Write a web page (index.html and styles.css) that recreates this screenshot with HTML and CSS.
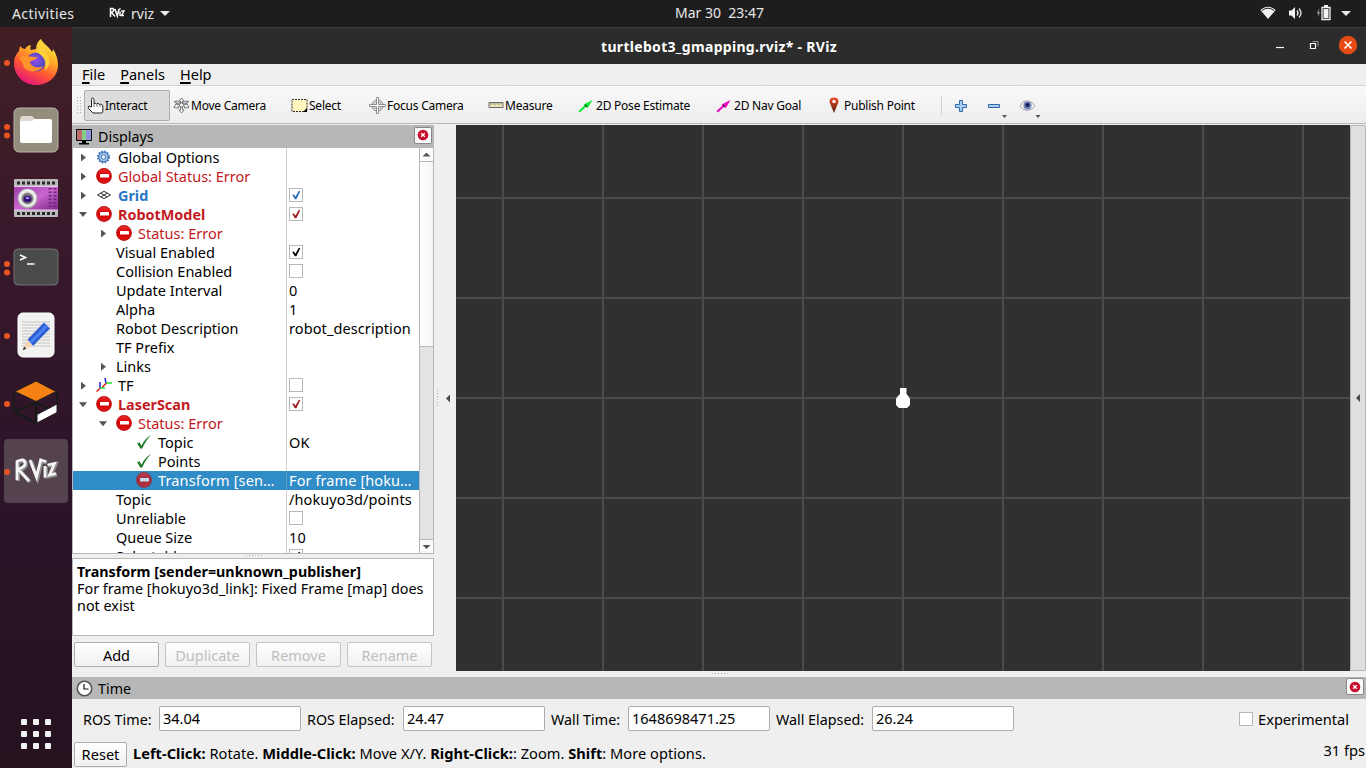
FILE: index.html
```html
<!DOCTYPE html>
<html lang="en">
<head>
<meta charset="utf-8">
<title>turtlebot3_gmapping.rviz* - RViz</title>
<link rel="stylesheet" href="styles.css">
</head>
<body>
<svg class="defs" width="0" height="0">
  <defs>
    <linearGradient id="redg" x1="0" y1="0" x2="0" y2="1"><stop offset="0" stop-color="#ee2a2a"/><stop offset=".5" stop-color="#d40000"/><stop offset="1" stop-color="#e01515"/></linearGradient>
    <symbol id="err" viewBox="0 0 16 16"><circle cx="8" cy="8" r="7.9" fill="#b51212"/><circle cx="8" cy="8" r="7.1" fill="url(#redg)"/><rect x="4" y="6" width="9" height="3.4" rx=".5" fill="#fff"/></symbol>
    <symbol id="ok" viewBox="0 0 14 14"><path d="M1 8.3 3 7.2 4.800 10.200C6.800 6 9.500 3 13.200.6 9.800 4.400 7.500 8 5.400 12.600L4 13z" fill="#1c7a25"/></symbol>
    <symbol id="tick" viewBox="0 0 14 14"><path d="M3.200 6.800 5 6.400 6.400 8.700 9.900 2.800 11.300 3.300 7.300 11.300H5.900z" fill="currentColor"/></symbol>
    <symbol id="close" viewBox="0 0 12 12"><circle cx="6" cy="6" r="5.300" fill="#c8102e"/><path d="m4.200 4.200 3.600 3.600m0-3.600L4.200 7.800" stroke="#fff" stroke-width="1.400"/></symbol>
    <symbol id="posearrow" viewBox="0 0 16 16"><path d="M1.200 13.800 8 7.500" stroke="currentColor" stroke-width="2.200"/><path d="M14.500 2 5.500 6.500 8 9l1.800 1z" fill="currentColor"/><path d="m7 7 1.800 1.600" stroke="#222" stroke-width="1.200"/></symbol>
  </defs>
</svg>
<div class="desktop">
  <header class="topbar">
    <span class="activities">Activities</span>
    <span class="appmenu"><svg width="16" height="12" viewBox="0 0 16 12" fill="none" stroke="#fff" stroke-width="1.500"><path d="M1.500 10V1.600H4Q6 3.400 2.500 5.500L6 9.500M6 2l2.300 7L10 2M11 4.500V9M12.200 4H15l-2.500 4.500H15M11 1.200v1.200"/></svg><span class="appname">rviz</span><i class="down"></i></span>
    <span class="clock">Mar 30&nbsp; 23:47</span>
    <span class="indicators">
      <svg width="16" height="14" viewBox="0 0 16 14"><path d="M.4 4.100Q8-2.400 15.600 4.100L8 13z" fill="#f2f2f2"/><path d="M2 4.500Q8-.1 14 4.500" fill="none" stroke="#222" stroke-width="1"/></svg>
      <svg width="16" height="14" viewBox="0 0 16 14"><path d="M1 4.500h2.500L7 1v12L3.500 9.500H1z" fill="#f2f2f2"/><path d="M9 4.500q2 2.500 0 5M11 2.500q4 4.500 0 9" fill="none" stroke="#ddd" stroke-width="1.400"/></svg>
      <svg width="15" height="16" viewBox="0 0 15 16"><path d="M3.500 3 .5 8.500h1.800L1.500 12.500 4.500 7H2.800z" fill="#888"/><path d="M6 2.500h8v12H6z" fill="none" stroke="#f2f2f2" stroke-width="1.300"/><path d="M8 0h4v2H8zM7.500 4h5v9h-5z" fill="#f2f2f2"/></svg>
      <i class="down"></i>
    </span>
  </header>

  <nav class="dock">
    <div class="slot one"><svg width="46" height="48" viewBox="0 0 46 48">
      <defs><linearGradient id="fx" x1=".8" y1="0" x2=".3" y2="1"><stop offset="0" stop-color="#fff14a"/><stop offset=".35" stop-color="#ffb02a"/><stop offset=".65" stop-color="#ff5a30"/><stop offset="1" stop-color="#e3127e"/></linearGradient><radialGradient id="fb" cx=".5" cy=".4"><stop offset="0" stop-color="#8f4df0"/><stop offset="1" stop-color="#5048b8"/></radialGradient></defs>
      <path d="M28 1c2 5 8 7 11 13 1-1 1-2 1-3 4 6 5 12 5 16 0 12-10 20-22 20S1 38 1 25c0-5 2-9 5-12l1-5c2 2 3 3 5 3 2-3 4-4 6-4-1 2-1 4 0 5l5-1c0-4 2-8 5-10z" fill="url(#fx)"/>
      <circle cx="23" cy="24" r="9.500" fill="url(#fb)"/><path d="M6 20c5-4 11-1 18-1 0 3-5 3-7 5 1 5 8 7 13 4-4 8-19 7-20-2z" fill="#ff942d"/><path d="M23 14q2-6 7-8 1 7 5 12c3 6 1 12-3 14q2-9-3-14-3-3-6-4z" fill="#ffcf3a"/></svg></div>
    <div class="slot two"><svg width="46" height="46" viewBox="0 0 46 46"><rect x="1" y="1" width="44" height="44" rx="5" fill="#938d7d" stroke="#b9b4a5"/><path d="M7 13q0-4 3-4h9l4 4h14q2 0 2 2v5H7z" fill="#dedad0"/><path d="M7 16q0-2 2-2h10l3-2h15q2 0 2 2v20q0 2-2 2H9q-2 0-2-2z" fill="#fff"/></svg></div>
    <div class="slot"><svg width="44" height="40" viewBox="0 0 44 40"><defs><linearGradient id="pg" x1="0" y1="0" x2="1" y2="1"><stop offset="0" stop-color="#9d3fa6"/><stop offset=".5" stop-color="#ca65cf"/><stop offset="1" stop-color="#7c2887"/></linearGradient></defs><rect y="1" width="44" height="38" rx="1" fill="#b9b9b9"/><path d="M3 5h40M3 35.500h40" stroke="#292929" stroke-width="3" stroke-dasharray="3 2"/><rect y="8" width="44" height="24" fill="url(#pg)"/><path d="M0 8.500h44M0 32h44" stroke="#f0c6f2"/><circle cx="13.500" cy="20.500" r="10" fill="#aaa"/><circle cx="13.500" cy="20" r="9" fill="#eee"/><circle cx="13.500" cy="20.500" r="6" fill="#777" stroke="#ccc"/><ellipse cx="13.500" cy="21" rx="4" ry="3.300" fill="#311272"/><ellipse cx="13.500" cy="20" rx="2" ry="1.300" fill="#a478ff"/><path d="M36 10v20M41 10v20" stroke="#702879" stroke-width="3" stroke-dasharray="1.500 2"/></svg></div>
    <div class="slot two"><svg width="46" height="38" viewBox="0 0 46 38"><rect x="1" y="1" width="44" height="36" rx="4" fill="#4a4a4a" stroke="#717171"/><path d="m7 7 5.500 2.500L7 12M14 16h7.500" fill="none" stroke="#fff" stroke-width="1.600"/></svg></div>
    <div class="slot one"><svg width="38" height="46" viewBox="0 0 38 46"><rect x="1" y="1" width="36" height="44" rx="5" fill="#f2f2f1" stroke="#fff"/><path d="M5 10h28M5 13h28M5 16h28M5 19h28M5 22h28M5 25h28M5 28h28M5 31h28M5 34h28" stroke="#c4c4c4"/><path d="M27 10.500 33 16.500 16 34 10.500 27.500z" fill="#2c5ed4"/><path d="m29 12.500 2 2L14 32l-2-2z" fill="#4b84ef"/><path d="m10.500 27.500 5.500 6.500-10 4z" fill="#f5d6b5"/><path d="m7.200 34.500 2 2.200-3.500 1.500z" fill="#333"/></svg></div>
    <div class="slot one"><svg width="50" height="48" viewBox="0 0 50 48"><path d="M3 13.500v19L25 44.500M25 23 3 33M25 23v21M25 24l20 9M46 13v12" fill="none" stroke="#171a17" stroke-width="2.200"/><path d="M25 2 45 12.500 25 22.500 4 12.500z" fill="#f58113" stroke="#20201c"/><path d="M26 35.500 46 25v8.500L26 44z" fill="#fff" stroke="#1d1b1c"/></svg></div>
    <div class="slot one"><div class="active"><svg width="46" height="30" viewBox="0 0 46 30" fill="none"><path d="M5 25V6.500Q12 3 13 7.500T6 14l11 12M18 5l6.500 17L29 3.500M33 11v11.500M35.500 10l7-1.500L37.500 20l6.500-1.500M30 5.500l4 1" stroke="#8b8b8b" stroke-width="4"/><path d="M4 24V5.500Q11 2 12 6.500T5 13l11 12M17 4l6.500 17L28 2.500M32 10v11.500M34.500 9l7-1.500L36.500 19l6.500-1.500M29 4.500l4 1" stroke="#f5f5f5" stroke-width="2.800"/></svg></div></div>
    <div class="apps"><i></i><i></i><i></i><i></i><i></i><i></i><i></i><i></i><i></i></div>
  </nav>

  <main class="window">
    <div class="titlebar"><b>turtlebot3_gmapping.rviz* - RViz</b>
      <span class="winctl"><svg width="82" height="20" viewBox="0 0 82 20" fill="none"><path d="M0 12.500h8" stroke="#fff" stroke-width="1.200"/><path d="M34.500 8.500h5v5h-5z" stroke="#fff" stroke-width="1.200"/><path d="M36.500 6.500h5.500v5" stroke="#999"/><circle cx="72" cy="10" r="9.200" fill="#e64b17"/><path d="m68.500 6.500 7 7m0-7-7 7" stroke="#fff" stroke-width="1.600"/></svg></span></div>
    <div class="menubar"><span><u>F</u>ile</span><span><u>P</u>anels</span><span><u>H</u>elp</span></div>
    <div class="toolbar">
      <svg class="grip" width="5" height="18" viewBox="0 0 5 18"><path d="M.5 0v18M3.500 0v18" stroke="#aaa" stroke-dasharray="1 2"/></svg>
      <div class="tool interact"><svg width="18" height="18" viewBox="0 0 18 18"><path d="M4.500 10V2.500Q4.500 1 5.500 1T7 2.500V7l1-1 1.500 1 1.500-.8 1.500 1.300 1.500-.5 1.800 1.500V15l-1 1H6L1.500 11.500Q.5 9.500 2 9z" fill="#fff" stroke="#222"/><path d="M7 6v4M10 7v3M13 8v2" stroke="#777"/></svg><span>Interact</span></div>
      <div class="tool move"><svg width="17" height="17" viewBox="0 0 17 17" fill="#fff" stroke="#777"><path d="M8.500 1 11 4H9.500v3H7.500V4H6zM8.500 16l2.500-3H9.500v-3h-2v3H6z"/><path d="M1 4.500 4 4l9 4 .5-2 2.500 4.500-4.500.5.500-1.500-8-3.500zM16 4.500 13 4 4 8l-.5-2L1 10.500l4.500.5-.5-1.500 8-3.500z"/><circle cx="8.500" cy="8" r="2"/></svg><span>Move Camera</span></div>
      <div class="tool select"><svg width="17" height="17" viewBox="0 0 17 17"><path d="M1 2.500h15v12H1z" fill="#fff6bf" stroke="#333" stroke-dasharray="2 1"/><path d="M16 11v4h-4z"/></svg><span>Select</span></div>
      <div class="tool focus"><svg width="17" height="17" viewBox="0 0 17 17" fill="none" stroke="#777"><circle cx="8.500" cy="8.500" r="5.500"/><circle cx="8.500" cy="8.500" r="3.700" stroke="#aaa"/><path d="M7.500 7.500v-7h2v7h7v2h-7v7h-2v-7h-7v-2z" fill="#fff" stroke-width=".8"/></svg><span>Focus Camera</span></div>
      <div class="tool measure"><svg width="16" height="17" viewBox="0 0 16 17"><path d="M1 5.500h14v5H1z" fill="#f6e9b5" stroke="#666"/><path d="M3 5.500v3M5 5.500v2M7 5.500v3M9 5.500v2M11 5.500v3M13 5.500v2" stroke="#777" stroke-width=".8"/></svg><span>Measure</span></div>
      <div class="tool pose"><svg width="16" height="16"><use href="#posearrow"/></svg><span>2D Pose Estimate</span></div>
      <div class="tool nav"><svg width="16" height="16"><use href="#posearrow"/></svg><span>2D Nav Goal</span></div>
      <div class="tool publish"><svg width="13" height="17" viewBox="0 0 13 17"><defs><linearGradient id="pin" x2="0" y2="1"><stop stop-color="#ed4925"/><stop offset="1" stop-color="#542313"/></linearGradient></defs><path d="M6 .5C1.500.5.500 4 2.500 7.500L6 16 9.500 7.500C11.500 4 10.500.5 6 .5z" fill="url(#pin)"/><circle cx="6" cy="4.500" r="1.700" fill="#fff"/></svg><span>Publish Point</span></div>
      <i class="sep"></i>
      <svg class="plus" width="14" height="14" viewBox="0 0 14 14"><path d="M5.500 1.500h3v4h4v3h-4v4h-3v-4h-4v-3h4z" fill="#a7cbed" stroke="#2f68ad"/></svg>
      <svg class="minus" width="24" height="28" viewBox="0 0 24 28"><path d="M2.500 12.500h11v3h-11z" fill="#a7cbed" stroke="#2f68ad"/><path d="M16 23h5l-2.500 3z" fill="#555"/></svg>
      <svg class="eye" width="24" height="28" viewBox="0 0 24 28"><path d="M1 14.500Q3 8.500 9 9q5 .5 7 5-2 4-8 4.500-4 0-7-4z" fill="#eee" stroke="#aaa"/><circle cx="8.500" cy="13.500" r="4" fill="#7183bd"/><circle cx="8.500" cy="13" r="2" fill="#111743"/><path d="M16.500 23h5L19 26z" fill="#555"/></svg>
    </div>

    <div class="center">
      <section class="displays">
        <div class="paneltitle"><svg width="16" height="17" viewBox="0 0 16 17"><path d="M0 1h16v12H0z" fill="#111"/><path d="M1 2h5v10H1z" fill="#bd6d6d"/><path d="M6 2h4v10H6z" fill="#83ce83"/><path d="M10 2h5v10h-5z" fill="#9292df"/><path d="M6 13h4v2h3v1.500H3V15h3z"/></svg><span>Displays</span><span class="closebtn"><svg width="12" height="12"><use href="#close"/></svg></span></div>
        <div class="tree">
          <div class="rows">
            <div class="row l0"><div class="name"><i class="tri"></i><svg class="ico" viewBox="0 0 16 16"><circle cx="7.500" cy="8" r="4.800" fill="#a9c8ec" stroke="#3e72b5" stroke-width="1.200"/><circle cx="7.500" cy="8" r="5.800" fill="none" stroke="#3e72b5" stroke-width="1.600" stroke-dasharray="1.600 1.440"/><circle cx="7.500" cy="8" r="2.200" fill="#eef5fd" stroke="#3e72b5"/></svg><span>Global Options</span></div><div class="val"></div></div>
            <div class="row l0 red"><div class="name"><i class="tri"></i><svg class="ico"><use href="#err"/></svg><span>Global Status: Error</span></div><div class="val"></div></div>
            <div class="row l0 blue bold"><div class="name"><i class="tri"></i><svg class="ico" viewBox="0 0 16 16" fill="none" stroke="#333"><path d="m1.500 8 6.500-3.700L14.500 8 8 11.700zM4.500 6l6.500 4M11.500 6l-6.500 4"/></svg><span>Grid</span></div><div class="val"><span class="box"><svg><use href="#tick"/></svg></span></div></div>
            <div class="row l0 red bold"><div class="name"><i class="tri open"></i><svg class="ico"><use href="#err"/></svg><span>RobotModel</span></div><div class="val"><span class="box"><svg><use href="#tick"/></svg></span></div></div>
            <div class="row l1 red"><div class="name"><i class="tri"></i><svg class="ico"><use href="#err"/></svg><span>Status: Error</span></div><div class="val"></div></div>
            <div class="row prop"><div class="name"><i class="tri none"></i><span>Visual Enabled</span></div><div class="val"><span class="box"><svg><use href="#tick"/></svg></span></div></div>
            <div class="row prop"><div class="name"><i class="tri none"></i><span>Collision Enabled</span></div><div class="val"><span class="box"></span></div></div>
            <div class="row prop"><div class="name"><i class="tri none"></i><span>Update Interval</span></div><div class="val">0</div></div>
            <div class="row prop"><div class="name"><i class="tri none"></i><span>Alpha</span></div><div class="val">1</div></div>
            <div class="row prop"><div class="name"><i class="tri none"></i><span>Robot Description</span></div><div class="val">robot_description</div></div>
            <div class="row prop"><div class="name"><i class="tri none"></i><span>TF Prefix</span></div><div class="val"></div></div>
            <div class="row prop"><div class="name"><i class="tri"></i><span>Links</span></div><div class="val"></div></div>
            <div class="row l0"><div class="name"><i class="tri"></i><svg class="ico" viewBox="0 0 16 16" fill="none" stroke-width="1.500"><path d="m.5 14.500 4-3.500M6 10.500l4.500-4.500" stroke="#e01818"/><path d="M4 11V5M10 6l-1-5" stroke="#2029df"/><path d="M4 11h5M10.500 6H16" stroke="#24e524"/></svg><span>TF</span></div><div class="val"><span class="box"></span></div></div>
            <div class="row l0 red bold"><div class="name"><i class="tri open"></i><svg class="ico"><use href="#err"/></svg><span>LaserScan</span></div><div class="val"><span class="box"><svg><use href="#tick"/></svg></span></div></div>
            <div class="row l1 red"><div class="name"><i class="tri open"></i><svg class="ico"><use href="#err"/></svg><span>Status: Error</span></div><div class="val"></div></div>
            <div class="row l2"><div class="name"><svg class="ico"><use href="#ok"/></svg><span>Topic</span></div><div class="val">OK</div></div>
            <div class="row l2"><div class="name"><svg class="ico"><use href="#ok"/></svg><span>Points</span></div><div class="val"></div></div>
            <div class="row l2 selected"><div class="name"><svg class="ico"><use href="#err"/></svg><span>Transform [sen…</span></div><div class="val">For frame [hoku…</div></div>
            <div class="row prop"><div class="name"><i class="tri none"></i><span>Topic</span></div><div class="val">/hokuyo3d/points</div></div>
            <div class="row prop"><div class="name"><i class="tri none"></i><span>Unreliable</span></div><div class="val"><span class="box"></span></div></div>
            <div class="row prop"><div class="name"><i class="tri none"></i><span>Queue Size</span></div><div class="val">10</div></div>
            <div class="row prop"><div class="name"><i class="tri none"></i><span>Selectable</span></div><div class="val"><span class="box"><svg><use href="#tick"/></svg></span></div></div>
          </div>
          <div class="scroll"><div class="arrow up"></div><div class="thumb"></div><div class="track"></div><div class="arrow dn"></div></div>
        </div>
        <div class="hsplit"></div>
        <div class="desc"><b>Transform [sender=unknown_publisher]</b><br>For frame [hokuyo3d_link]: Fixed Frame [map] does<br>not exist</div>
        <div class="buttons"><button>Add</button><button disabled>Duplicate</button><button disabled>Remove</button><button disabled>Rename</button></div>
      </section>
      <div class="lhandle"><i class="vdots"></i><i class="left"></i></div>
      <section class="view"><svg width="14" height="20" viewBox="0 0 14 20"><path d="M4 0h6.500v6L13 9l1 2v6l-3 3H3l-3-3v-6l1-2 3-3z" fill="#fff"/></svg></section>
      <div class="rhandle"><i class="left"></i></div>
    </div>

    <div class="hsplit wide"></div>
    <div class="paneltitle time"><svg width="17" height="17" viewBox="0 0 17 17"><circle cx="8.500" cy="8.500" r="7.200" fill="#fff" stroke="#555" stroke-width="1.600"/><path d="M8 4v5h4.500" fill="none" stroke="#111" stroke-width="1.200"/></svg><span>Time</span><span class="closebtn"><svg width="12" height="12"><use href="#close"/></svg></span></div>
    <div class="timerow">
      <label class="t1">ROS Time:</label><span class="input">34.04</span>
      <label class="t2">ROS Elapsed:</label><span class="input">24.47</span>
      <label class="t3">Wall Time:</label><span class="input">1648698471.25</span>
      <label class="t4">Wall Elapsed:</label><span class="input">26.24</span>
      <span class="exp"><span class="box"></span><span class="explabel">Experimental</span></span>
    </div>
    <footer class="status"><button class="reset">Reset</button><span class="help"><b>Left-Click:</b> Rotate. <b>Middle-Click:</b> Move X/Y. <b>Right-Click:</b>: Zoom. <b>Shift</b>: More options.</span><span class="fps">31 fps</span></footer>
  </main>
</div>
</body>
</html>
```
FILE: styles.css
```css
* { box-sizing: border-box; }
body { margin: 0; font: 14px/19px "Noto Sans", "Open Sans", sans-serif; color: #000; overflow: hidden; }
svg { display: block; flex: none; }
.defs { position: absolute; }
i { display: block; flex: none; }
.desktop { width: 1366px; height: 768px; display: grid; grid-template: 27px 741px / 72px 1294px; }

.topbar { grid-column: 1 / 3; background: #1d1d1d; color: #e8e8e8; display: grid; grid-template-columns: 109px 1fr auto; align-items: center; position: relative; padding-bottom: 1px; }
.activities { padding-left: 12px; letter-spacing: .4px; }
.appmenu { display: flex; align-items: center; }
.appname { margin-left: 6px; width: 24px; }
.down { width: 0; height: 0; border: 5px solid transparent; border-top-color: #e8e8e8; border-bottom: 0; margin-left: 5px; }
.clock { position: absolute; left: 675px; top: 3px; white-space: nowrap; }
.indicators { display: flex; align-items: center; gap: 12px; padding-right: 15px; }
.indicators .down { margin-left: -2px; }

.dock { background: linear-gradient(#421f25, #38192b 28%, #2d1429 62%, #24121f); display: flex; flex-direction: column; height: 741px; padding-top: 1px; }
.slot { height: 68.200px; display: grid; place-items: center; position: relative; }
.slot.one::before, .slot.two::before { content: ""; position: absolute; z-index: 1; left: 4px; top: 32px; width: 6px; height: 6px; border-radius: 50%; background: #e95420; }
.slot.two::before { top: 28px; box-shadow: 0 8.500px #e95420; }
.active { width: 64px; height: 64px; background: #54434f; border-radius: 4px; display: grid; place-items: center; }
.apps { margin: auto auto 19px; display: grid; grid-template-columns: repeat(3, 6px); gap: 6px; }
.apps i { width: 6px; height: 6px; border-radius: 1px; background: #f2f2f2; }

.window { background: #efefef; display: flex; flex-direction: column; font-size: 14.500px; }
.window > * { flex: none; }
.titlebar { height: 37px; background: #2c2c2c; border-top: 1px solid #3d3d3d; color: #fff; display: flex; align-items: center; justify-content: center; position: relative; font-size: 14px; letter-spacing: .3px; }
.winctl { position: absolute; right: 8px; top: 7px; }
.menubar { height: 22px; border-bottom: 1px solid #d3d3d3; display: flex; padding-left: 10px; gap: 15px; line-height: 21px; }
.menubar u { text-decoration-thickness: 2px; text-underline-offset: 2px; }
.toolbar { height: 38px; background: linear-gradient(#f9f9f9, #ededed); border-bottom: 1px solid #b8b8b8; display: flex; align-items: center; padding-top: 2px; font: 12px/16px "Noto Sans", sans-serif; letter-spacing: -.230px; }
.grip { margin: 0 3px 0 5px; }
.tool { display: flex; align-items: center; height: 31px; white-space: nowrap; }
.tool span { margin-left: 1px; }
.interact { width: 86px; background: #dcdcdc; border: 1px solid #ababab; border-radius: 2px; padding-left: 2px; margin: 0 3px 0 -1px; }
.interact span { margin-left: 0; }
.move { width: 118px; }
.select { width: 78px; }
.select span { margin-left: 1px; }
.focus { width: 119px; }
.focus span { margin-left: 1px; }
.measure { width: 90px; }
.measure span { margin-left: 1px; }
.pose { width: 138px; color: #10ed33; }
.nav { width: 112px; color: #ed0cc4; }
.pose span, .nav span { color: #000; margin-left: 2px; }
.publish { width: 113px; }
.publish span { margin-left: 3px; }
.sep { width: 1px; height: 19px; background: #d0d0d0; }
.plus { margin-left: 12px; }
.minus { margin-left: 18px; }
.eye { margin-left: 9px; }

.center { height: 547px; margin-top: 1px; display: flex; flex: none; }
.displays { width: 362px; display: flex; flex-direction: column; }
.paneltitle { height: 23px; background: #b7b7b7; display: flex; align-items: center; padding: 0 2px 0 4px; flex: none; font-size: 14.300px; }
.paneltitle > span:nth-child(2) { margin-left: 6px; }
.closebtn { width: 18px; height: 17px; border: 1px solid #888; border-radius: 2px; background: #fafafa; display: grid; place-items: center; margin: -3px 0 0 auto; }
.tree { height: 406px; flex: none; display: flex; background: #fff; border: 1px solid #b7b7b7; border-top: 0; overflow: hidden; }
.rows { width: 346px; }
.row { height: 19.020px; display: flex; align-items: center; white-space: nowrap; }
.name { width: 214px; height: 100%; border-right: 1px solid #d0d0d0; display: flex; align-items: center; padding-left: 8px; }
.val { padding-left: 2px; height: 100%; display: flex; align-items: center; flex: 1; letter-spacing: .1px; }
.l1 .name, .prop .name { padding-left: 28px; }
.l2 .name { padding-left: 63px; }
.ico { width: 16px; height: 16px; margin: -2px 6px 0 0; }
.tri { width: 5px; height: 8px; background: #555; clip-path: polygon(0 0, 100% 50%, 0 100%); margin-right: 10px; }
.tri.open { width: 8px; height: 5px; clip-path: polygon(0 0, 100% 0, 50% 100%); margin-left: -2px; margin-right: 9px; }
.tri.none { background: none; }
.red { color: #c4191d; }
.blue { color: #2a76c6; }
.bold { font-weight: 700; font-size: 14.400px; }
.red .box { color: #a0141a; }
.blue .box { color: #2768ac; }
.selected { background: #308cc6; color: #fff; letter-spacing: .15px; }
.selected .name { border-color: #5b9fc9; }
.selected .ico { opacity: .72; }
.box { width: 14px; height: 14px; border: 1px solid #b8b8b8; background: #fff; display: block; margin-top: -2px; flex: none; }
.box svg { width: 14px; height: 14px; margin: -1px; }
.scroll { width: 14px; border-left: 1px solid #b7b7b7; display: flex; flex-direction: column; }
.arrow { height: 14px; background: #fafafa; border-bottom: 1px solid #b7b7b7; display: grid; place-items: center; }
.arrow::before { content: ""; width: 8px; height: 4px; background: #555; clip-path: polygon(50% 0, 100% 100%, 0 100%); }
.arrow.dn::before { transform: scaleY(-1); }
.arrow.dn { border-bottom: 0; border-top: 1px solid #b7b7b7; }
.thumb { height: 185px; background: linear-gradient(90deg, #fff, #f4f4f4); border-bottom: 1px solid #b7b7b7; }
.track { flex: 1; background: #e3e3e3; }
.hsplit { height: 4px; flex: none; background: repeating-linear-gradient(90deg, #aaa 0 1px, transparent 1px 3px) 174px 1px / 17px 1px no-repeat; }
.hsplit.wide { height: 5px; background-position: 640px 1px; }
.desc { height: 78px; flex: none; background: #fff; border: 1px solid #b7b7b7; padding: 4px 4px; line-height: 17px; white-space: nowrap; font-size: 14.400px; }
.desc b { font-size: 14.300px; }
.buttons { display: flex; gap: 6px; padding: 6px 2px 0; }
button { font: inherit; width: 85px; height: 25px; border: 1px solid #aeaeae; border-radius: 2px; background: linear-gradient(#fff, #f0f0f0); padding: 0; color: #000; line-height: 22px; }
button:disabled { color: #bebebe; border-color: #c4c4c4; }
.lhandle { width: 22px; display: flex; align-items: center; gap: 8px; padding-left: 3px; }
.vdots { width: 1px; height: 17px; background: repeating-linear-gradient(#aaa 0 1px, transparent 1px 3px); }
.left { width: 4px; height: 8px; background: #4a4a4a; clip-path: polygon(100% 0, 0 50%, 100% 100%); }
.view { width: 894px; height: 546px; background: linear-gradient(#4b4b4b 2px, transparent 2px) 0 72px / 100px 100px, linear-gradient(90deg, #4b4b4b 2px, transparent 2px) 46px 0 / 100px 100px #303030; display: grid; place-items: center; }
.rhandle { width: 16px; height: 546px; border: 1px solid #b7b7b7; border-radius: 2px; background: #dfdfdf; display: grid; place-items: center; }

.paneltitle.time { height: 22px; padding-left: 4px; padding-right: 2px; }
.paneltitle.time > span:nth-child(2) { margin-left: 5px; }
.timerow { height: 42px; display: flex; align-items: center; padding: 0 17px 0 11px; flex: none; white-space: nowrap; font-size: 14.300px; }
.timerow label { margin-top: -1px; }
.input { width: 142px; height: 25px; border: 1px solid #adadad; border-radius: 2px; background: #fff; padding-left: 3px; line-height: 23px; margin: -3px 6px 0 0; font-size: 14.500px; }
.t1 { width: 76px; }
.t2 { width: 96px; }
.t3 { width: 77px; }
.t4 { width: 96px; }
.exp { display: flex; align-items: center; gap: 5px; margin: -1px 0 0 auto; font-size: 14.600px; }
.status { height: 27px; display: flex; align-items: center; padding: 0 2px 2px; white-space: nowrap; font-size: 14.600px; }
.reset { width: 53px; margin-top: 1px; }
.help { margin-left: 6px; margin-top: -1px; letter-spacing: .03px; }
.fps { margin: -6px -1px 0 auto; }
```
